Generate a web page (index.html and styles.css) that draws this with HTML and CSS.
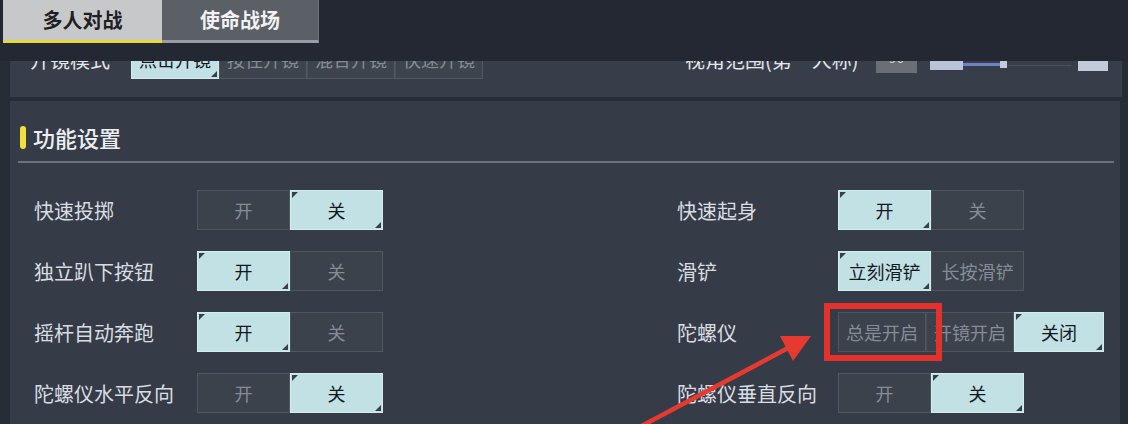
FILE: index.html
```html
<!DOCTYPE html>
<html lang="zh-CN">
<head>
<meta charset="utf-8">
<title>设置</title>
<link rel="stylesheet" href="styles.css">
</head>
<body>
<div class="screen">
  <header class="topbar">
    <nav class="tabs">
      <div class="tab tab-active">多人对战</div>
      <div class="tab tab-idle">使命战场</div>
    </nav>
  </header>
  <main class="content">
    <section class="panel panel-prev">
      <div class="prev-row">
        <div class="prev-left">
          <span class="prev-label">开镜模式</span>
          <div class="seg seg-prev">
            <span class="opt on">点击开镜</span>
            <span class="opt">按住开镜</span>
            <span class="opt">混合开镜</span>
            <span class="opt">快速开镜</span>
          </div>
        </div>
        <div class="prev-right">
          <span class="prev-label">视角范围(第一人称)</span>
          <span class="num-box">90</span>
          <div class="slider">
            <span class="sl-fill"></span>
            <span class="sl-blue"></span>
            <span class="sl-handle"></span>
            <span class="sl-track"></span>
            <span class="sl-end"></span>
          </div>
        </div>
      </div>
    </section>
    <section class="panel panel-main">
      <div class="panel-title"><span class="mark"></span><h2>功能设置</h2></div>
      <div class="divider"></div>
      <div class="grid">
        <span class="label">快速投掷</span>
        <div class="seg"><span class="opt">开</span><span class="opt on">关</span></div>
        <span class="label">快速起身</span>
        <div class="seg"><span class="opt on">开</span><span class="opt">关</span></div>

        <span class="label">独立趴下按钮</span>
        <div class="seg"><span class="opt on">开</span><span class="opt">关</span></div>
        <span class="label">滑铲</span>
        <div class="seg"><span class="opt on">立刻滑铲</span><span class="opt">长按滑铲</span></div>

        <span class="label">摇杆自动奔跑</span>
        <div class="seg"><span class="opt on">开</span><span class="opt">关</span></div>
        <span class="label">陀螺仪</span>
        <div class="seg seg-3"><span class="opt">总是开启</span><span class="opt">开镜开启</span><span class="opt on">关闭</span></div>

        <span class="label">陀螺仪水平反向</span>
        <div class="seg"><span class="opt">开</span><span class="opt on">关</span></div>
        <span class="label">陀螺仪垂直反向</span>
        <div class="seg"><span class="opt">开</span><span class="opt on">关</span></div>
      </div>
    </section>
  </main>
</div>
<div class="annot-box"></div>
<svg class="annot-arrow" width="1128" height="424" viewBox="0 0 1128 424">
  <line x1="634" y1="430" x2="790" y2="347" stroke="#e63a30" stroke-width="4.5" stroke-linecap="round"/>
  <polygon points="811,336 780,336 793,361" fill="#e63a30"/>
</svg>
</body>
</html>
```

FILE: styles.css
```css
* { box-sizing: border-box; margin: 0; padding: 0; }

html, body {
  width: 1128px;
  height: 424px;
  overflow: hidden;
}

body {
  background: #272d37;
  font-family: "Noto Sans CJK SC", "Noto Sans", sans-serif;
  color: #d8dce1;
  position: relative;
}

.screen {
  width: 1128px;
  height: 424px;
  display: flex;
  flex-direction: column;
  overflow: hidden;
}

/* ---------- top bar ---------- */
.topbar {
  height: 61px;
  flex: none;
  background: #232832;
  padding-left: 3px;
}

.tabs {
  display: flex;
  height: 43px;
}

.tab {
  height: 43px;
  line-height: 40px;
  text-align: center;
  font-size: 20px;
  font-weight: 700;
}

.tab-active {
  width: 159px;
  background: #c7c8ca;
  color: #1e2024;
  border-bottom: 3px solid #e9d83a;
}

.tab-idle {
  width: 157px;
  background: #5b5f66;
  color: #f1f2f3;
  border-bottom: 3px solid #9a9da3;
  border-right: 1px solid #6c7077;
}

/* ---------- content ---------- */
.content {
  flex: 1;
  display: flex;
  flex-direction: column;
  padding: 0 6px 0 10px;
  min-height: 0;
}

.panel {
  background: #353c47;
}

.panel-prev {
  height: 36px;
  flex: none;
  overflow: hidden;
  margin-bottom: 4px;
  background: #373e49;
}

.prev-row {
  margin-top: -22px;
  height: 40px;
  display: flex;
  align-items: center;
}

.prev-left {
  display: flex;
  align-items: center;
  padding-left: 20px;
  width: 675px;
}

.prev-label {
  font-size: 20px;
  color: #e3e6ea;
  width: 101px;
  white-space: nowrap;
}

.seg-prev .opt { width: 88px; }

.prev-right {
  display: flex;
  align-items: flex-end;
  height: 40px;
}

.prev-right .prev-label {
  width: 191px;
  align-self: center;
}

.num-box {
  width: 41px;
  height: 28px;
  margin-bottom: 6px;
  background: #6a6f77;
  color: #c9ccd0;
  font-size: 14px;
  text-align: center;
  line-height: 24px;
}

.slider {
  display: flex;
  align-items: flex-end;
  height: 40px;
  margin-left: 13px;
}

.sl-fill {
  width: 33px;
  height: 22px;
  margin-bottom: 9px;
  background: #b9c4d8;
}

.sl-blue {
  width: 37px;
  height: 3px;
  margin-bottom: 13px;
  background: #6d84c4;
}

.sl-handle {
  width: 7px;
  height: 7px;
  margin-bottom: 11px;
  background: #c2cbdc;
}

.sl-track {
  width: 64px;
  height: 1px;
  margin-bottom: 13px;
  background: #4a515c;
}

.sl-end {
  width: 30px;
  height: 24px;
  margin-left: 7px;
  margin-bottom: 8px;
  background: #c3cada;
}

.panel-main {
  flex: 1;
  padding: 24px 6px 0 8px;
  width: 1110px;
}

.panel-title {
  display: flex;
  align-items: center;
  height: 24px;
}

.mark {
  width: 6px;
  height: 23px;
  margin-left: 2px;
  border-radius: 3px;
  background: #f1e03c;
}

.panel-title h2 {
  margin-left: 7px;
  font-size: 22px;
  font-weight: 500;
  line-height: 24px;
  color: #eceef1;
}

.divider {
  margin-top: 12px;
  height: 2px;
  background: #6b727c;
}

.grid {
  margin-top: 27px;
  padding-left: 16px;
  display: grid;
  grid-template-columns: 163px 480px 161px auto;
  grid-auto-rows: 40px;
  row-gap: 21px;
  align-items: center;
}

.label {
  font-size: 20px;
  color: #d9dde2;
  white-space: nowrap;
}

/* ---------- segmented toggles ---------- */
.seg {
  display: flex;
  height: 40px;
}

.opt {
  position: relative;
  width: 93px;
  height: 40px;
  display: flex;
  align-items: center;
  justify-content: center;
  font-size: 18px;
  color: #868c95;
  background: rgba(255, 255, 255, 0.03);
  border: 1px solid rgba(255, 255, 255, 0.11);
  white-space: nowrap;
}

.opt + .opt { border-left-color: rgba(255, 255, 255, 0.07); }

.seg-3 .opt { width: 88px; }
.seg-3 .opt:last-child { width: 90px; }

.opt.on {
  background: #c2e1e4;
  color: #14181d;
  border-color: #d3ecee;
}

.opt.on::before,
.opt.on::after {
  content: "";
  position: absolute;
  width: 0;
  height: 0;
}

.opt.on::before {
  left: 1px;
  top: 1px;
  border-top: 6px solid #36404b;
  border-right: 6px solid transparent;
}

.opt.on::after {
  right: 1px;
  bottom: 1px;
  border-bottom: 6px solid #36404b;
  border-left: 6px solid transparent;
}

/* ---------- annotations ---------- */
.annot-box {
  position: absolute;
  left: 824px;
  top: 303px;
  width: 118px;
  height: 58px;
  border: 6px solid #e4312c;
}

.annot-arrow {
  position: absolute;
  left: 0;
  top: 0;
  pointer-events: none;
}
```
